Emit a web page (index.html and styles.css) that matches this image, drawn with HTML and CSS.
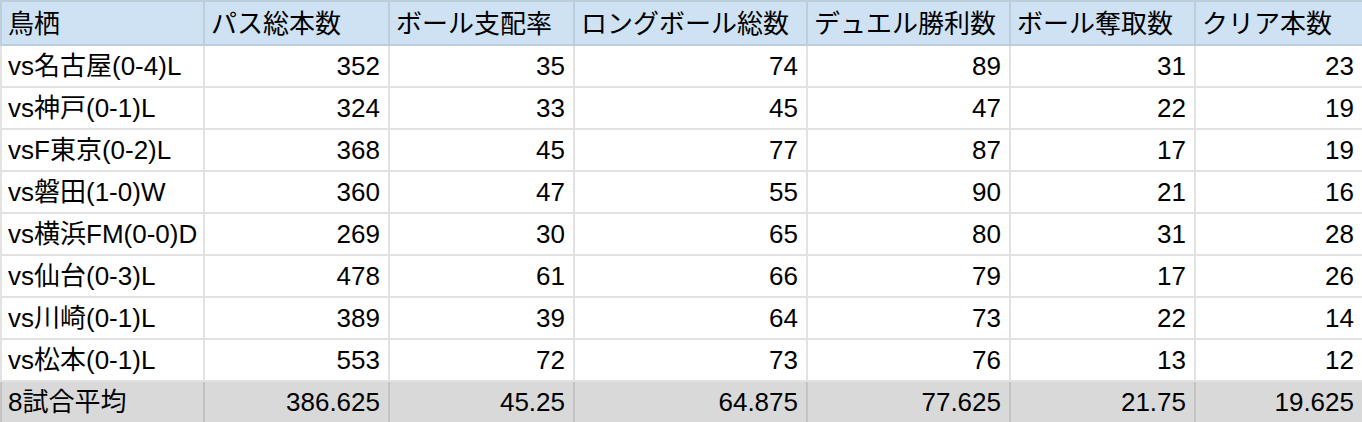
FILE: index.html
```html
<!DOCTYPE html>
<html lang="ja">
<head>
<meta charset="utf-8">
<link rel="stylesheet" href="styles.css">
</head>
<body>
<table class="stats">
<colgroup>
<col class="c1"><col class="c2"><col class="c3"><col class="c4"><col class="c5"><col class="c6"><col class="c7">
</colgroup>
<thead>
<tr><th>鳥栖</th><th>パス総本数</th><th>ボール支配率</th><th>ロングボール総数</th><th>デュエル勝利数</th><th>ボール奪取数</th><th>クリア本数</th></tr>
</thead>
<tbody>
<tr><td>vs名古屋(0-4)L</td><td>352</td><td>35</td><td>74</td><td>89</td><td>31</td><td>23</td></tr>
<tr><td>vs神戸(0-1)L</td><td>324</td><td>33</td><td>45</td><td>47</td><td>22</td><td>19</td></tr>
<tr><td>vsF東京(0-2)L</td><td>368</td><td>45</td><td>77</td><td>87</td><td>17</td><td>19</td></tr>
<tr><td>vs磐田(1-0)W</td><td>360</td><td>47</td><td>55</td><td>90</td><td>21</td><td>16</td></tr>
<tr><td>vs横浜FM(0-0)D</td><td>269</td><td>30</td><td>65</td><td>80</td><td>31</td><td>28</td></tr>
<tr><td>vs仙台(0-3)L</td><td>478</td><td>61</td><td>66</td><td>79</td><td>17</td><td>26</td></tr>
<tr><td>vs川崎(0-1)L</td><td>389</td><td>39</td><td>64</td><td>73</td><td>22</td><td>14</td></tr>
<tr><td>vs松本(0-1)L</td><td>553</td><td>72</td><td>73</td><td>76</td><td>13</td><td>12</td></tr>
</tbody>
<tfoot>
<tr><td>8試合平均</td><td>386.625</td><td>45.25</td><td>64.875</td><td>77.625</td><td>21.75</td><td>19.625</td></tr>
</tfoot>
</table>
</body>
</html>
```
FILE: styles.css
```css
html, body {
  margin: 0;
  padding: 0;
  background: #ffffff;
}
.stats {
  border-collapse: collapse;
  table-layout: fixed;
  width: 1362px;
  font-family: "Liberation Sans", Arial, "Noto Sans CJK JP", sans-serif;
  font-size: 26px;
  color: #000000;
}
.c1 { width: 203px; }
.c2 { width: 185px; }
.c3 { width: 185px; }
.c4 { width: 233px; }
.c5 { width: 203px; }
.c6 { width: 185px; }
.c7 { width: 168px; }
.stats th,
.stats td {
  height: 40px;
  padding: 0 8px 0 6px;
  border: 2px solid #e2e2e2;
  white-space: nowrap;
  overflow: hidden;
  line-height: 30px;
}
.stats th {
  background: #cfe2f3;
  border-color: #bccddc;
  font-weight: normal;
  text-align: left;
  height: 41px;
  padding-top: 1px;
}
.stats td {
  text-align: right;
}
.stats td:first-child {
  text-align: left;
}
.stats tfoot td {
  background: #d9d9d9;
  border-color: #c3c3c3;
  height: 40px;
}
```
